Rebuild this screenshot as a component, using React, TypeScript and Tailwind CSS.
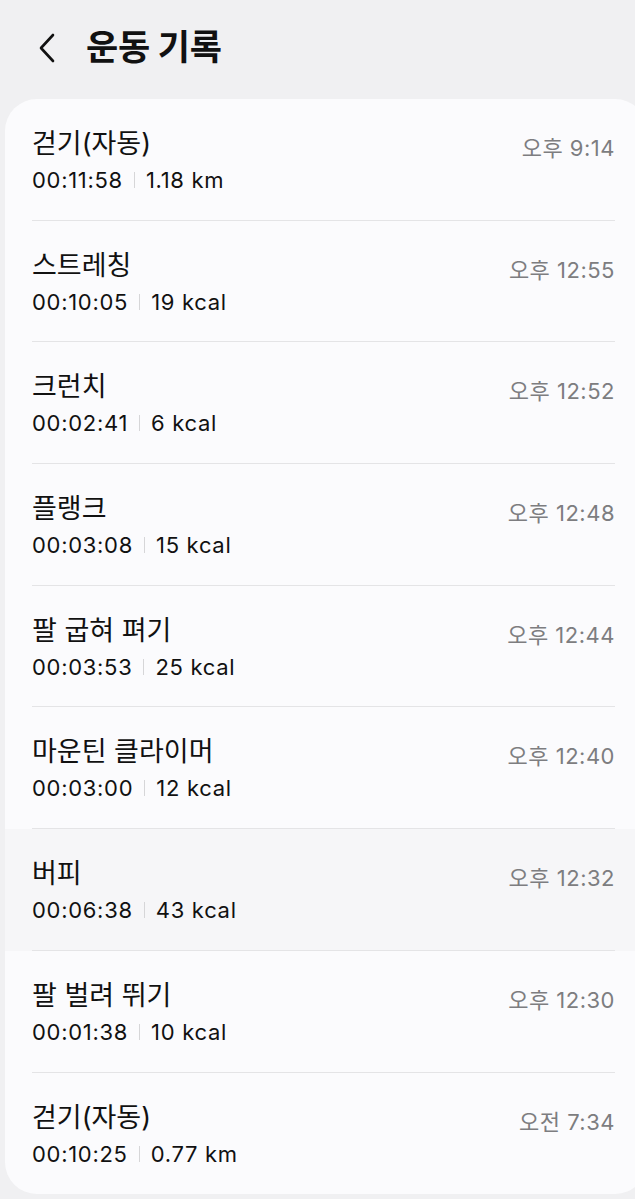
const records = [
  { name: "걷기(자동)", duration: "00:11:58", value: "1.18 km", time: "오후 9:14" },
  { name: "스트레칭", duration: "00:10:05", value: "19 kcal", time: "오후 12:55" },
  { name: "크런치", duration: "00:02:41", value: "6 kcal", time: "오후 12:52" },
  { name: "플랭크", duration: "00:03:08", value: "15 kcal", time: "오후 12:48" },
  { name: "팔 굽혀 펴기", duration: "00:03:53", value: "25 kcal", time: "오후 12:44" },
  { name: "마운틴 클라이머", duration: "00:03:00", value: "12 kcal", time: "오후 12:40" },
  { name: "버피", duration: "00:06:38", value: "43 kcal", time: "오후 12:32", pressed: true },
  { name: "팔 벌려 뛰기", duration: "00:01:38", value: "10 kcal", time: "오후 12:30" },
  { name: "걷기(자동)", duration: "00:10:25", value: "0.77 km", time: "오전 7:34" },
]

export default function App() {
  return (
    <div
      className="w-[635px] h-[1199px] overflow-hidden bg-[#f0f0f2] text-[#111]"
      style={{ fontFamily: 'Inter, "Noto Sans CJK KR", sans-serif' }}
    >
      {/* header */}
      <div className="h-[99px] flex items-center pl-[36px] pb-[4px]">
        <svg width="22" height="32" viewBox="0 0 22 32" fill="none">
          <path d="M17 3 L5 16 L17 29" stroke="#111" strokeWidth="2.6" strokeLinecap="round" strokeLinejoin="round" />
        </svg>
        <h1 className="ml-[28px] text-[35px] font-bold leading-none tracking-[-0.3px]">운동 기록</h1>
      </div>

      {/* list card */}
      <div className="ml-[5px] w-[642px] rounded-[32px] bg-[#fbfbfd] overflow-hidden">
        {records.map((r, i) => (
          <div key={i} className={r.pressed ? "bg-[#f6f6f8] pl-[27px] pr-[32px]" : "pl-[27px] pr-[32px]"}>
            <div
              className={
                "h-[121.7px] flex justify-between " +
                (i < records.length - 1 ? "border-b border-[#e4e4e6]" : "")
              }
            >
              <div className="pt-[28px]">
                <div className="text-[27px] leading-[34px] tracking-[0px]">{r.name}</div>
                <div className="mt-[5px] flex items-center text-[22px] leading-[28px] tracking-[0.7px]">
                  <span>{r.duration}</span>
                  <span className="mx-[11px] h-[16px] w-px bg-[#d6d6d8]" />
                  <span>{r.value}</span>
                </div>
              </div>
              <div className="pt-[33px] text-[22px] leading-[32px] text-[#7d7d80] tracking-[0.5px]">
                {r.time}
              </div>
            </div>
          </div>
        ))}
      </div>
    </div>
  )
}
